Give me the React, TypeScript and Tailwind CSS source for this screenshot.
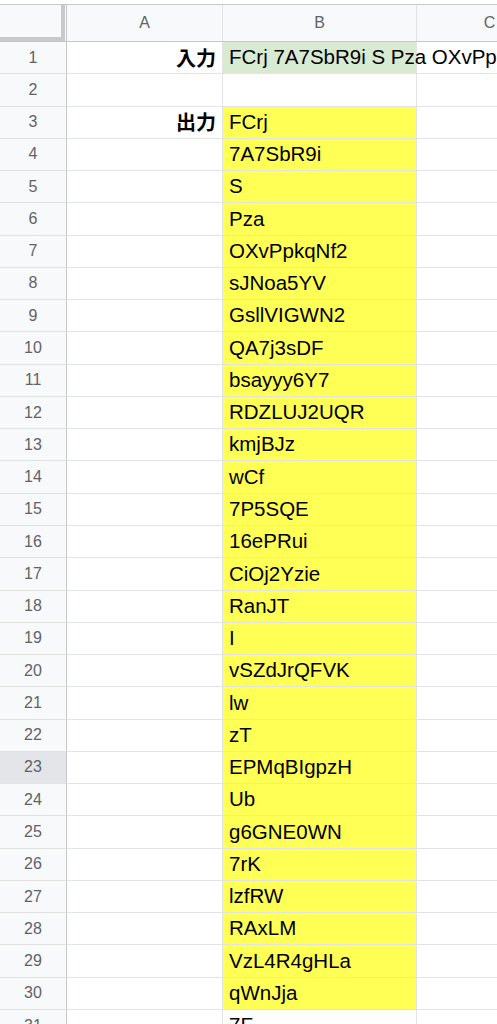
import React from "react";

const outputs = [
  "FCrj", "7A7SbR9i", "S", "Pza", "OXvPpkqNf2", "sJNoa5YV", "GsllVIGWN2", "QA7j3sDF",
  "bsayyy6Y7", "RDZLUJ2UQR", "kmjBJz", "wCf", "7P5SQE", "16ePRui", "CiOj2Yzie", "RanJT",
  "I", "vSZdJrQFVK", "lw", "zT", "EPMqBIgpzH", "Ub", "g6GNE0WN", "7rK", "lzfRW", "RAxLM",
  "VzL4R4gHLa", "qWnJja", "7F",
];

const font = { fontFamily: '"Liberation Sans", Arial, "Noto Sans CJK JP", sans-serif' };

function RowHead({ n, active }: { n: number; active?: boolean }) {
  return (
    <div
      className={`flex items-center justify-center border-r border-b border-r-[#c4c7c5] border-b-[#e1e3e1] text-[16px] text-[#5f6368] ${
        active ? "bg-[#e3e5e8]" : "bg-[#f8f9fa]"
      }`}
    >
      {n}
    </div>
  );
}

export default function App() {
  const rows: { n: number; a: string; b: string; bg: string }[] = [
    { n: 1, a: "入力", b: "FCrj 7A7SbR9i S Pza OXvPpkqNf2 sJNoa5YV GsllVIGWN2", bg: "bg-[#d9ead3]" },
    { n: 2, a: "", b: "", bg: "" },
    ...outputs.map((b, i) => ({
      n: i + 3,
      a: i === 0 ? "出力" : "",
      b,
      bg: i + 3 <= 30 ? "bg-[#ffff55]" : "",
    })),
  ];

  return (
    <div className="w-[497px] h-[1024px] overflow-hidden bg-white" style={font}>
      {/* top strip */}
      <div className="h-[5px] border-b border-[#c7c7c7]" />

      <div className="w-[640px] grid grid-cols-[67px_156px_194px_146px_77px] grid-rows-[37px] auto-rows-[32.27px]">
        {/* header row */}
        <div className="bg-[#f8f9fa] border-r border-b border-[#c4c7c5]">
          <div className="w-[65px] h-[36px] border-r-4 border-b-4 border-[#c7c9cc]" />
        </div>
        {["A", "B", "C", "D"].map((c) => (
          <div
            key={c}
            className="flex items-center justify-center bg-[#f8f9fa] border-r border-b border-r-[#e1e3e1] border-b-[#c4c7c5] text-[16px] text-[#5f6368]"
          >
            {c}
          </div>
        ))}

        {rows.map((r) => (
          <React.Fragment key={r.n}>
            <RowHead n={r.n} active={r.n === 23} />
            <div className="flex items-center justify-end px-[6px] border-r border-b border-[#e2e3e3] text-[20px] font-bold text-black">
              <span style={{ fontFamily: '"Noto Sans CJK JP", sans-serif' }}>{r.a}</span>
            </div>
            <div
              className={`flex items-center pl-[6px] border-r border-b border-[#e2e3e3] text-[20.5px] text-black whitespace-nowrap overflow-visible relative z-10 ${r.bg}`}
            >
              {r.b}
            </div>
            <div className="border-r border-b border-[#e2e3e3]" />
            <div className="border-r border-b border-[#e2e3e3]" />
          </React.Fragment>
        ))}
      </div>
    </div>
  );
}
